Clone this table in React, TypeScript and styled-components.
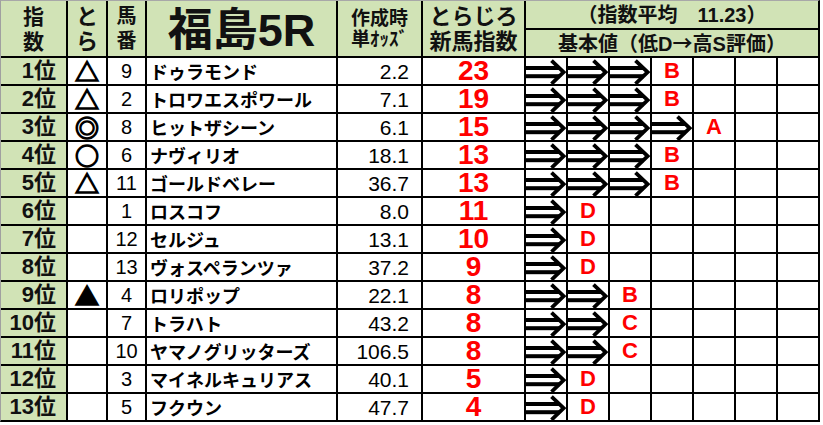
import React from "react";
import styled, { createGlobalStyle } from "styled-components";

const GlobalStyle = createGlobalStyle`
  html, body {
    margin: 0;
    padding: 0;
    background: #ffffff;
  }
  body {
    font-family: "Liberation Sans", "Noto Sans CJK JP", sans-serif;
    color: #000;
  }
`;

const HEAD_BG = "#d1e3b6";

const Sheet = styled.div`
  display: grid;
  grid-template-columns: 65px 38px 37px 189px 83px 101px repeat(7, 40px);
  grid-template-rows: 27px 26px repeat(13, 26px);
  gap: 2px;
  width: max-content;
  background: #000;
  border-top: 1px solid #a8a8a8;
  border-left: 1px solid #a0a0a0;
  border-right: 2px solid #000;
  border-bottom: 2px solid #000;
`;

const HeadCell = styled.div<{ $col: string; $row: string; $size: number; $lh?: number }>`
  grid-column: ${(p) => p.$col};
  grid-row: ${(p) => p.$row};
  background: ${HEAD_BG};
  display: flex;
  flex-direction: column;
  align-items: center;
  justify-content: center;
  font-family: "Liberation Sans", "Noto Sans CJK JP", sans-serif;
  font-weight: 700;
  font-size: ${(p) => p.$size}px;
  line-height: ${(p) => (p.$lh ? `${p.$lh}px` : "1")};
  color: #111;
  white-space: nowrap;
`;

const HeadLine = styled.span`
  display: block;
`;

const WideSym = styled.span`
  font-family: "Noto Sans CJK JP", sans-serif;
  font-weight: 700;
`;

const Title = styled.span`
  font-size: 45px;
  font-weight: 700;
  line-height: 1;
  margin-top: 4px;
`;

const RankCell = styled.div`
  background: ${HEAD_BG};
  display: flex;
  align-items: center;
  justify-content: flex-end;
  padding-right: 10px;
  font-family: "Liberation Sans", "Noto Sans CJK JP", sans-serif;
  font-weight: 700;
  font-size: 22px;
  line-height: 1;
  color: #111;
`;

const MarkCell = styled.div`
  background: #fff;
  display: flex;
  align-items: center;
  justify-content: center;
  font-family: "Noto Sans CJK JP", sans-serif;
  font-weight: 700;
  font-size: 24px;
  line-height: 1;
  -webkit-text-stroke: 1.4px #000;
`;

const NumCell = styled.div`
  background: #fff;
  display: flex;
  align-items: center;
  justify-content: center;
  font-family: "Liberation Sans", sans-serif;
  font-size: 20px;
  line-height: 1;
`;

const NameCell = styled.div`
  background: #fff;
  display: flex;
  align-items: center;
  padding-left: 3px;
  font-family: "Noto Sans CJK JP", sans-serif;
  font-weight: 700;
  font-size: 18px;
  line-height: 1;
  white-space: nowrap;
  overflow: hidden;
`;

const OddsCell = styled.div`
  background: #fff;
  display: flex;
  align-items: center;
  justify-content: flex-end;
  padding-right: 12px;
  font-family: "Liberation Sans", sans-serif;
  font-size: 21px;
  line-height: 1;
`;

const IndexCell = styled.div`
  background: #fff;
  display: flex;
  align-items: center;
  justify-content: center;
  font-family: "Liberation Sans", sans-serif;
  font-weight: 700;
  font-size: 28px;
  line-height: 1;
  color: #ff0000;
`;

const ArrowCell = styled.div`
  background: #fff;
  display: flex;
  svg {
    display: block;
    width: 100%;
    height: 100%;
  }
`;

const GradeCell = styled.div`
  background: #fff;
  display: flex;
  align-items: center;
  justify-content: center;
  font-family: "Liberation Sans", sans-serif;
  font-weight: 700;
  font-size: 22px;
  line-height: 1;
  color: #ff0000;
`;

const EmptyCell = styled.div`
  background: #fff;
`;

function DoubleArrow() {
  return (
    <svg viewBox="0 0 40 26" aria-label="⇒">
      <rect x="0" y="8" width="34" height="4" fill="#000" />
      <rect x="0" y="16.2" width="34" height="4" fill="#000" />
      <polyline
        points="25.5,2.6 37.6,14.2 25.5,25.8"
        fill="none"
        stroke="#000"
        strokeWidth="3.8"
        strokeLinejoin="miter"
      />
    </svg>
  );
}

type Row = {
  rank: number;
  mark: string;
  num: number;
  name: string;
  odds: string;
  index: number;
  arrows: number;
  grade: string;
};

const rows: Row[] = [
  { rank: 1, mark: "△", num: 9, name: "ドゥラモンド", odds: "2.2", index: 23, arrows: 3, grade: "B" },
  { rank: 2, mark: "△", num: 2, name: "トロワエスポワール", odds: "7.1", index: 19, arrows: 3, grade: "B" },
  { rank: 3, mark: "◎", num: 8, name: "ヒットザシーン", odds: "6.1", index: 15, arrows: 4, grade: "A" },
  { rank: 4, mark: "○", num: 6, name: "ナヴィリオ", odds: "18.1", index: 13, arrows: 3, grade: "B" },
  { rank: 5, mark: "△", num: 11, name: "ゴールドベレー", odds: "36.7", index: 13, arrows: 3, grade: "B" },
  { rank: 6, mark: "", num: 1, name: "ロスコフ", odds: "8.0", index: 11, arrows: 1, grade: "D" },
  { rank: 7, mark: "", num: 12, name: "セルジュ", odds: "13.1", index: 10, arrows: 1, grade: "D" },
  { rank: 8, mark: "", num: 13, name: "ヴォスペランツァ", odds: "37.2", index: 9, arrows: 1, grade: "D" },
  { rank: 9, mark: "▲", num: 4, name: "ロリポップ", odds: "22.1", index: 8, arrows: 2, grade: "B" },
  { rank: 10, mark: "", num: 7, name: "トラハト", odds: "43.2", index: 8, arrows: 2, grade: "C" },
  { rank: 11, mark: "", num: 10, name: "ヤマノグリッターズ", odds: "106.5", index: 8, arrows: 2, grade: "C" },
  { rank: 12, mark: "", num: 3, name: "マイネルキュリアス", odds: "40.1", index: 5, arrows: 1, grade: "D" },
  { rank: 13, mark: "", num: 5, name: "フクウン", odds: "47.7", index: 4, arrows: 1, grade: "D" },
];

const SCALE_COLS = 7;

function ScaleCells({ arrows, grade }: { arrows: number; grade: string }) {
  const cells: React.ReactNode[] = [];
  for (let i = 0; i < SCALE_COLS; i++) {
    if (i < arrows)
      cells.push(
        <ArrowCell key={i}>
          <DoubleArrow />
        </ArrowCell>
      );
    else if (i === arrows) cells.push(<GradeCell key={i}>{grade}</GradeCell>);
    else cells.push(<EmptyCell key={i} />);
  }
  return <>{cells}</>;
}

export default function App() {
  return (
    <>
      <GlobalStyle />
      <Sheet>
        <HeadCell $col="1" $row="1 / span 2" $size={21} $lh={25}>
          <HeadLine>指</HeadLine>
          <HeadLine>数</HeadLine>
        </HeadCell>
        <HeadCell $col="2" $row="1 / span 2" $size={22} $lh={25}>
          <HeadLine>と</HeadLine>
          <HeadLine>ら</HeadLine>
        </HeadCell>
        <HeadCell $col="3" $row="1 / span 2" $size={20} $lh={25}>
          <HeadLine>馬</HeadLine>
          <HeadLine>番</HeadLine>
        </HeadCell>
        <HeadCell $col="4" $row="1 / span 2" $size={45}>
          <Title>福島5R</Title>
        </HeadCell>
        <HeadCell $col="5" $row="1 / span 2" $size={19} $lh={21}>
          <HeadLine>作成時</HeadLine>
          <HeadLine>単ｵｯｽﾞ</HeadLine>
        </HeadCell>
        <HeadCell $col="6" $row="1 / span 2" $size={22} $lh={25}>
          <HeadLine>とらじろ</HeadLine>
          <HeadLine>新馬指数</HeadLine>
        </HeadCell>
        <HeadCell $col="7 / span 7" $row="1" $size={20}>
          <HeadLine>（指数平均　11.23）</HeadLine>
        </HeadCell>
        <HeadCell $col="7 / span 7" $row="2" $size={20}>
          <HeadLine>
            基本値（低D<WideSym>→</WideSym>高S評価）
          </HeadLine>
        </HeadCell>

        {rows.map((r) => (
          <React.Fragment key={r.rank}>
            <RankCell>{r.rank}位</RankCell>
            <MarkCell>{r.mark}</MarkCell>
            <NumCell>{r.num}</NumCell>
            <NameCell>{r.name}</NameCell>
            <OddsCell>{r.odds}</OddsCell>
            <IndexCell>{r.index}</IndexCell>
            <ScaleCells arrows={r.arrows} grade={r.grade} />
          </React.Fragment>
        ))}
      </Sheet>
    </>
  );
}
